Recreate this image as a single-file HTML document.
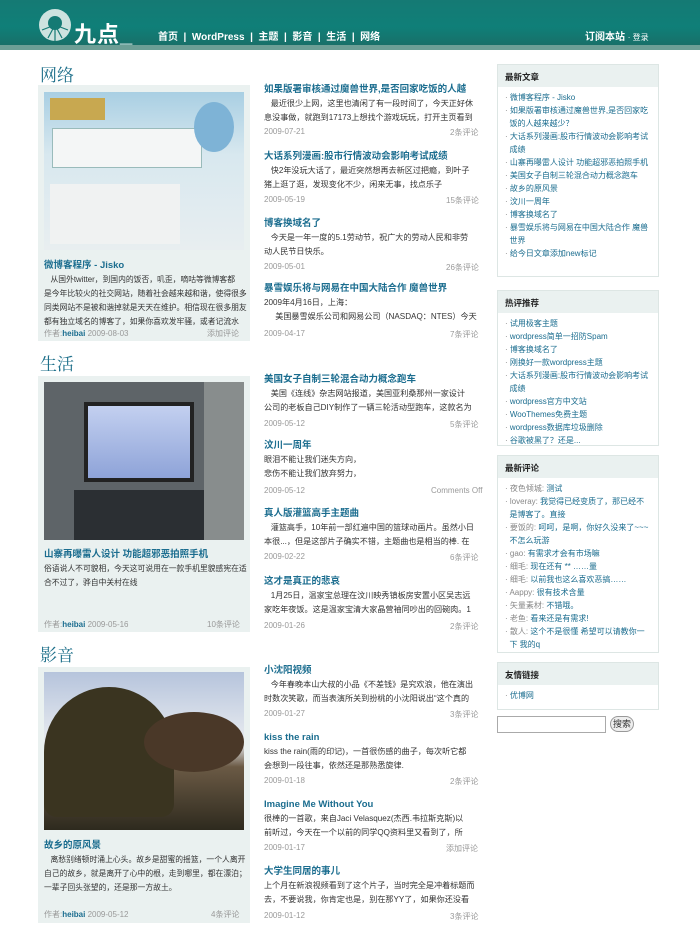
<!DOCTYPE html>
<html><head><meta charset="utf-8"><style>
*{margin:0;padding:0;box-sizing:border-box}
body{width:700px;height:930px;background:#fff;position:relative;overflow:hidden;font-family:"Liberation Sans","Noto Sans CJK SC",sans-serif;font-size:8.5px;color:#333}
.a{position:absolute;white-space:nowrap}
#hd{position:absolute;left:0;top:0;width:700px;height:45px;background:linear-gradient(#157a74,#0f7f78 60%,#187069)}
#band{position:absolute;left:0;top:45px;width:700px;height:5px;background:#6d9f96}
.nav{color:#fff;font-weight:bold;font-size:10px;top:28px}
.sec{font-size:17px;color:#1d6f8a;font-family:"Liberation Serif","Noto Serif CJK SC",serif}
.box{position:absolute;left:38px;width:212px;background:#eaf1f0}
.t{font-weight:bold;color:#1b6d8f;font-size:9.5px;white-space:nowrap;overflow:hidden;height:14px;line-height:14px}
.tx{font-size:8.1px;color:#333;line-height:14px;white-space:nowrap;overflow:hidden}
.lt{font-size:7.8px}
.d{color:#999;font-size:8px}
.mid{position:absolute;left:264px;width:213px;overflow:hidden}
.sb{position:absolute;left:497px;width:162px;border:1px solid #dde6e4;background:#fff;overflow:hidden}
.sb h4{background:#eaf1f0;font-size:8.5px;padding:6px 7px;height:22px;color:#222}
.sb ul{list-style:none;padding:4px 7px 4px 7px;font-size:8px;line-height:13px;color:#1b6d8f;white-space:nowrap}
.sb li:before{content:"· ";color:#888}
.g{color:#888}
</style></head><body>
<div id="hd"></div><div id="band"></div>
<svg class="a" style="left:38px;top:8px" width="34" height="34" viewBox="0 0 34 34"><circle cx="17" cy="17" r="16" fill="#cde3df"/><circle cx="17" cy="15" r="7" fill="#157a74"/><path d="M4 22L17 17L30 22M10 30L17 17L24 30M17 17V33" stroke="#157a74" stroke-width="1.2" fill="none"/></svg>
<div class="a" style="left:74px;top:17px;color:#fff;font-size:22px;font-weight:bold;letter-spacing:1px">九点_</div>
<div class="a nav" style="left:158px">首页 &nbsp;| &nbsp;WordPress &nbsp;| &nbsp;主题 &nbsp;| &nbsp;影音 &nbsp;| &nbsp;生活 &nbsp;| &nbsp;网络</div>
<div class="a nav" style="left:585px">订阅本站 <span style="font-weight:normal;font-size:8px">· 登录</span></div>

<div class="a sec" style="left:40px;top:61px">网络</div>
<div class="box" style="top:85px;height:256px"></div>
<div class="a" style="left:44px;top:92px;width:200px;height:158px;background:linear-gradient(#a9cfe3,#d8e8ef 40%,#e8eef0)"><div style="position:absolute;left:6px;top:6px;width:55px;height:22px;background:#c8a850"></div><div style="position:absolute;left:8px;top:36px;width:150px;height:40px;background:#f4f6f6;border:1px solid #9bb"></div><div style="position:absolute;left:150px;top:10px;width:40px;height:50px;background:#7eb3d6;border-radius:50%"></div><div style="position:absolute;left:6px;top:92px;width:130px;height:60px;background:#f0f2f2"></div></div>
<div class="a t" style="left:44px;top:259px">微博客程序 - Jisko</div>
<div class="a tx lt" style="left:44px;top:273px;width:204px">&nbsp;&nbsp;&nbsp;从国外twitter，到国内的饭否，叽歪，嘀咕等微博客都<br>是今年比较火的社交网站，随着社会越来越和谐，使得很多<br>同类网站不是被和谐掉就是天天在维护。相信现在很多朋友<br>都有独立域名的博客了，如果你喜欢发牢骚，或者记流水</div>
<div class="a d" style="left:44px;top:328px">作者:<b style="color:#1b6d8f">heibai</b> 2009-08-03</div><div class="a d" style="left:207px;top:328px">添加评论</div>

<div class="a sec" style="left:40px;top:350px">生活</div>
<div class="box" style="top:376px;height:256px"></div>
<div class="a" style="left:44px;top:382px;width:200px;height:158px;background:#5e6468"><div style="position:absolute;left:40px;top:20px;width:110px;height:80px;background:linear-gradient(#c3d0f0,#8ea3d8);border:4px solid #222"></div><div style="position:absolute;left:30px;top:108px;width:130px;height:50px;background:#2b2f33"></div><div style="position:absolute;left:160px;top:0;width:40px;height:158px;background:#888d8d"></div></div>
<div class="a t" style="left:44px;top:548px">山寨再曝雷人设计 功能超邪恶拍照手机</div>
<div class="a tx lt" style="left:44px;top:562px;width:204px">俗语说人不可貌相，今天这可说用在一款手机里貌感宪在适<br>合不过了，骅自中关村在线</div>
<div class="a d" style="left:44px;top:619px">作者:<b style="color:#1b6d8f">heibai</b> 2009-05-16</div><div class="a d" style="left:207px;top:619px">10条评论</div>

<div class="a sec" style="left:40px;top:641px">影音</div>
<div class="box" style="top:667px;height:256px"></div>
<div class="a" style="left:44px;top:672px;width:200px;height:158px;background:linear-gradient(#b6c4dc,#e9ecf0 45%,#6b5a45 60%,#2e2a1e)"><div style="position:absolute;left:0;top:15px;width:130px;height:130px;background:#3a3420;border-radius:50% 50% 10% 10%"></div><div style="position:absolute;left:100px;top:40px;width:100px;height:60px;background:#4a3828;border-radius:50%"></div></div>
<div class="a t" style="left:44px;top:839px">故乡的原风景</div>
<div class="a tx lt" style="left:44px;top:853px;width:204px">&nbsp;&nbsp;&nbsp;离愁别绪顿时涌上心头。故乡是甜蜜的摇篮，一个人离开<br>自己的故乡，就是离开了心中的根，走到哪里，都在漂泊；<br>一辈子回头张望的，还是那一方故土。</div>
<div class="a d" style="left:44px;top:909px">作者:<b style="color:#1b6d8f">heibai</b> 2009-05-12</div><div class="a d" style="left:211px;top:909px">4条评论</div>

<!-- middle -->
<div class="mid" style="top:83px"><div class="t">如果版署审核通过魔兽世界,是否回家吃饭的人越</div><div class="tx">&nbsp;&nbsp;&nbsp;最近很少上网，这里也清闲了有一段时间了，今天正好休<br>息没事做，就跑到17173上想找个游戏玩玩，打开主页看到</div></div>
<div class="a d" style="left:264px;top:127px">2009-07-21</div><div class="a d" style="left:450px;top:127px">2条评论</div>
<div class="mid" style="top:150px"><div class="t">大话系列漫画:股市行情波动会影响考试成绩</div><div class="tx">&nbsp;&nbsp;&nbsp;快2年没玩大话了，最近突然想再去新区过把瘾，到叶子<br>猪上逛了逛，发现变化不少，闲来无事，找点乐子</div></div>
<div class="a d" style="left:264px;top:195px">2009-05-19</div><div class="a d" style="left:446px;top:195px">15条评论</div>
<div class="mid" style="top:217px"><div class="t">博客换域名了</div><div class="tx">&nbsp;&nbsp;&nbsp;今天是一年一度的5.1劳动节，祝广大的劳动人民和非劳<br>动人民节日快乐。</div></div>
<div class="a d" style="left:264px;top:262px">2009-05-01</div><div class="a d" style="left:446px;top:262px">26条评论</div>
<div class="mid" style="top:282px"><div class="t">暴雪娱乐将与网易在中国大陆合作 魔兽世界</div><div class="tx">2009年4月16日，上海：<br>&nbsp;&nbsp;&nbsp;&nbsp;&nbsp;美国暴雪娱乐公司和网易公司（NASDAQ：NTES）今天宣</div></div>
<div class="a d" style="left:264px;top:329px">2009-04-17</div><div class="a d" style="left:450px;top:329px">7条评论</div>

<div class="mid" style="top:373px"><div class="t">美国女子自制三轮混合动力概念跑车</div><div class="tx">&nbsp;&nbsp;&nbsp;美国《连线》杂志网站报道，美国亚利桑那州一家设计<br>公司的老板自己DIY制作了一辆三轮活动型跑车，这款名为</div></div>
<div class="a d" style="left:264px;top:419px">2009-05-12</div><div class="a d" style="left:450px;top:419px">5条评论</div>
<div class="mid" style="top:439px"><div class="t">汶川一周年</div><div class="tx">眼泪不能让我们迷失方向，<br>悲伤不能让我们放弃努力，</div></div>
<div class="a d" style="left:264px;top:486px">2009-05-12</div><div class="a d" style="left:431px;top:486px">Comments Off</div>
<div class="mid" style="top:507px"><div class="t">真人版灌篮高手主题曲</div><div class="tx">&nbsp;&nbsp;&nbsp;灌篮高手，10年前一部红遍中国的篮球动画片。虽然小日<br>本很...，但是这部片子确实不错，主题曲也是相当的棒. 在</div></div>
<div class="a d" style="left:264px;top:552px">2009-02-22</div><div class="a d" style="left:450px;top:552px">6条评论</div>
<div class="mid" style="top:575px"><div class="t">这才是真正的悲哀</div><div class="tx">&nbsp;&nbsp;&nbsp;1月25日，温家宝总理在汶川映秀镇板房安置小区吴志远<br>家吃年夜饭。这是温家宝清大家晶营袖同吵出的回碗肉。1</div></div>
<div class="a d" style="left:264px;top:621px">2009-01-26</div><div class="a d" style="left:450px;top:621px">2条评论</div>

<div class="mid" style="top:664px"><div class="t">小沈阳视频</div><div class="tx">&nbsp;&nbsp;&nbsp;今年春晚本山大叔的小品《不差钱》是究欢浪，他在演出<br>时数次笑歌，而当表演所关到扮桃的小沈阳说出“这个真的</div></div>
<div class="a d" style="left:264px;top:709px">2009-01-27</div><div class="a d" style="left:450px;top:709px">3条评论</div>
<div class="mid" style="top:731px"><div class="t">kiss the rain</div><div class="tx">kiss the rain(雨的印记)，一首很伤感的曲子，每次听它都<br>会想到一段往事，依然还是那熟悉旋律.</div></div>
<div class="a d" style="left:264px;top:776px">2009-01-18</div><div class="a d" style="left:450px;top:776px">2条评论</div>
<div class="mid" style="top:798px"><div class="t">Imagine Me Without You</div><div class="tx">很棒的一首歌，来自Jaci Velasquez(杰西.韦拉斯克斯)以<br>前听过，今天在一个以前的同学QQ资料里又看到了，所</div></div>
<div class="a d" style="left:264px;top:843px">2009-01-17</div><div class="a d" style="left:446px;top:843px">添加评论</div>
<div class="mid" style="top:865px"><div class="t">大学生同居的事儿</div><div class="tx">上个月在新浪视频看到了这个片子，当时完全是冲着标题而<br>去，不要说我，你肯定也是，别在那YY了，如果你还没看</div></div>
<div class="a d" style="left:264px;top:911px">2009-01-12</div><div class="a d" style="left:450px;top:911px">3条评论</div>

<!-- sidebar -->
<div class="sb" style="top:64px;height:213px"><h4>最新文章</h4><ul>
<li>微博客程序 - Jisko</li><li>如果版署审核通过魔兽世界,是否回家吃<br>&nbsp;&nbsp;饭的人越来越少？</li><li>大话系列漫画:股市行情波动会影响考试<br>&nbsp;&nbsp;成绩</li><li>山寨再曝雷人设计 功能超邪恶拍照手机</li><li>美国女子自制三轮混合动力概念跑车</li><li>故乡的原风景</li><li>汶川一周年</li><li>博客换域名了</li><li>暴雪娱乐将与网易在中国大陆合作 魔兽<br>&nbsp;&nbsp;世界</li><li>给今日文章添加new标记</li></ul></div>
<div class="sb" style="top:290px;height:156px"><h4>热评推荐</h4><ul>
<li>试用极客主题</li><li>wordpress简单一招防Spam</li><li>博客换域名了</li><li>刚换好一款wordpress主题</li><li>大话系列漫画:股市行情波动会影响考试<br>&nbsp;&nbsp;成绩</li><li>wordpress官方中文站</li><li>WooThemes免费主题</li><li>wordpress数据库垃圾删除</li><li>谷歌被黑了？还是...</li><li>微软发布IE8正式版</li></ul></div>
<div class="sb" style="top:455px;height:198px"><h4>最新评论</h4><ul>
<li><span class="g">夜色倾城:</span> 测试</li><li><span class="g">loveray:</span> 我觉得已经变质了，那已经不<br>&nbsp;&nbsp;是博客了。直接</li><li><span class="g">要饭的:</span> 呵呵，是啊，你好久没来了~~~<br>&nbsp;&nbsp;不怎么玩游</li><li><span class="g">gao:</span> 有需求才会有市场嘛</li><li><span class="g">细毛:</span> 现在还有 ** ……量</li><li><span class="g">细毛:</span> 以前我也这么喜欢恶搞……</li><li><span class="g">Aappy:</span> 很有技术含量</li><li><span class="g">矢量素材:</span> 不错哦。</li><li><span class="g">老鱼:</span> 看来还是有需求!</li><li><span class="g">散人:</span> 这个不是很懂 希望可以请教你一<br>&nbsp;&nbsp;下 我的q</li></ul></div>
<div class="sb" style="top:662px;height:48px"><h4>友情链接</h4><ul><li>优博网</li></ul></div>
<div class="a" style="left:497px;top:716px;width:109px;height:17px;border:1px solid #aaa"></div>
<div class="a" style="left:610px;top:716px;width:24px;height:16px;border:1px solid #999;border-radius:8px;background:#eee;font-size:9px;text-align:center;line-height:14px">搜索</div>
</body></html>
